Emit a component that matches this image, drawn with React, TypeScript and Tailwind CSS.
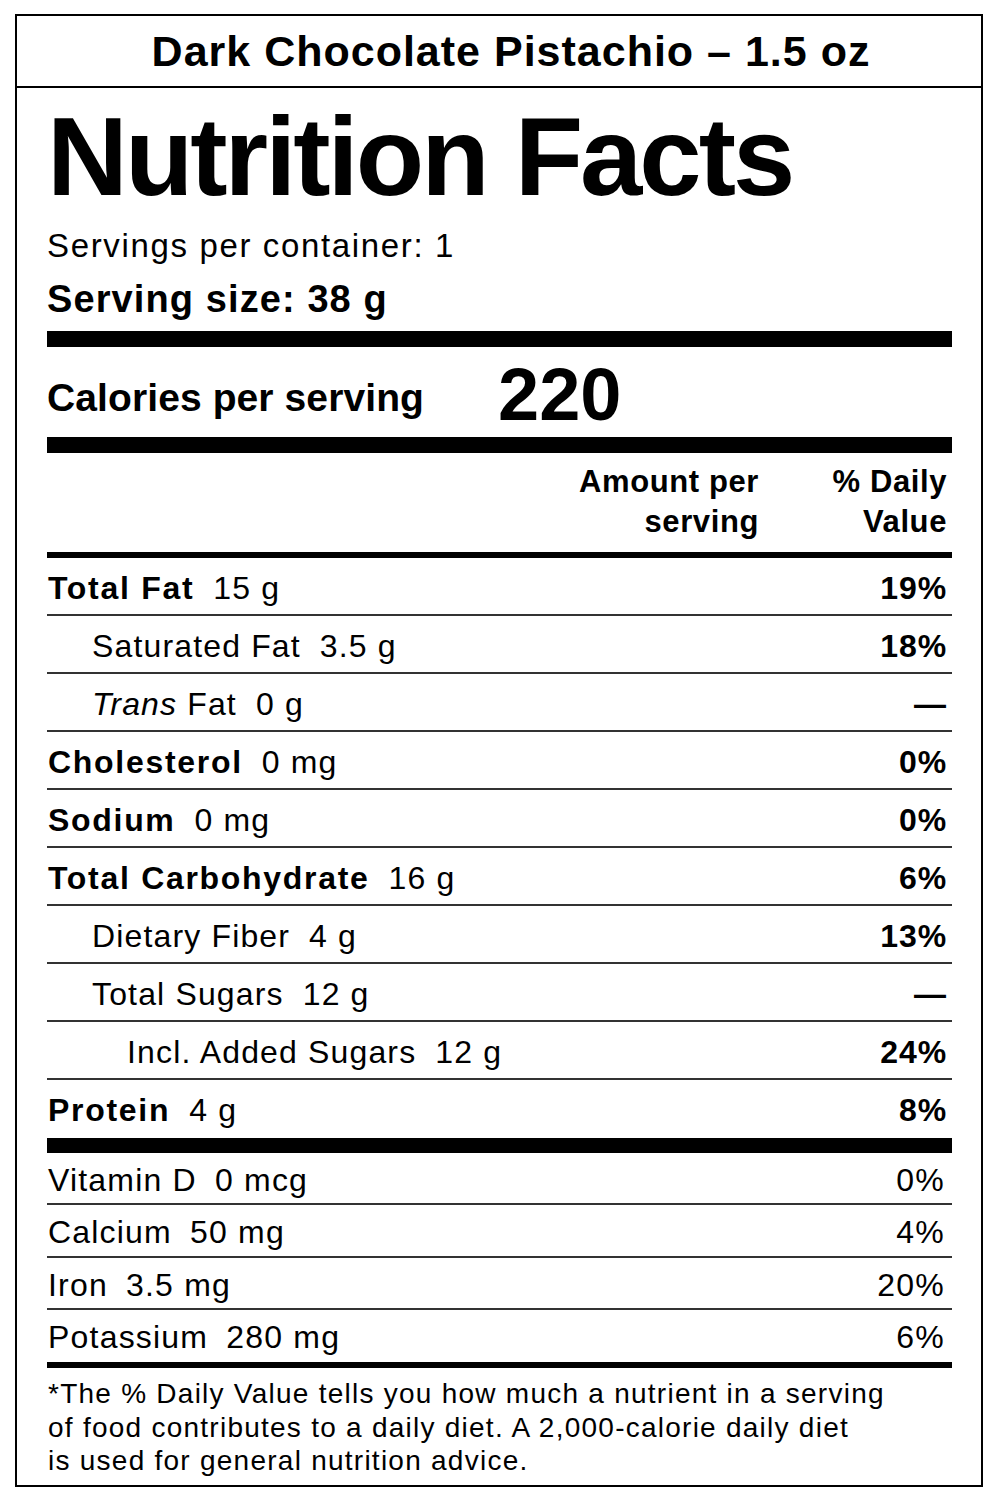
import React from "react";

type Row = {
  label: React.ReactNode;
  amount: string;
  dv: string;
  bold?: boolean;
  indent?: 0 | 1 | 2;
  last?: boolean;
};

const rows: Row[] = [
  { label: "Total Fat", amount: "15 g", dv: "19%", bold: true },
  { label: "Saturated Fat", amount: "3.5 g", dv: "18%", indent: 1 },
  {
    label: (
      <>
        <span className="italic">Trans</span> Fat
      </>
    ),
    amount: "0 g",
    dv: "—",
    indent: 1,
  },
  { label: "Cholesterol", amount: "0 mg", dv: "0%", bold: true },
  { label: "Sodium", amount: "0 mg", dv: "0%", bold: true },
  { label: "Total Carbohydrate", amount: "16 g", dv: "6%", bold: true },
  { label: "Dietary Fiber", amount: "4 g", dv: "13%", indent: 1 },
  { label: "Total Sugars", amount: "12 g", dv: "—", indent: 1 },
  { label: "Incl. Added Sugars", amount: "12 g", dv: "24%", indent: 2 },
  { label: "Protein", amount: "4 g", dv: "8%", bold: true, last: true },
];

const vitamins = [
  { label: "Vitamin D", amount: "0 mcg", dv: "0%" },
  { label: "Calcium", amount: "50 mg", dv: "4%" },
  { label: "Iron", amount: "3.5 mg", dv: "20%" },
  { label: "Potassium", amount: "280 mg", dv: "6%", last: true },
];

function NutrientRow({ r }: { r: Row }) {
  const indentCls = r.indent === 2 ? "pl-[80px]" : r.indent === 1 ? "pl-[45px]" : "pl-[1px]";
  return (
    <div
      className={`flex h-[58px] items-start justify-between pt-[15px] text-[32px] leading-[30px] tracking-[1.15px] ${
        r.last ? "" : "border-b-2 border-[#333]"
      }`}
    >
      <div className={`flex ${indentCls}`}>
        <span className={r.bold ? "font-bold tracking-[1.7px]" : ""}>{r.label}</span>
        <span className="pl-[19px]">{r.amount}</span>
      </div>
      <span className="pr-[5px] font-bold tracking-[0.9px]">{r.dv}</span>
    </div>
  );
}

export default function App() {
  return (
    <div className="min-h-[1500px] bg-white pt-[14px] font-['Liberation_Sans',Arial,sans-serif] text-black">
      <div className="ml-[15px] w-[968px] border-2 border-black">
        {/* Product header */}
        <div className="h-[72px] border-b-2 border-black pl-[24px] pt-[14px] text-center text-[43px] font-bold leading-[42px] tracking-[1px]">
          Dark Chocolate Pistachio – 1.5 oz
        </div>

        <div className="pl-[30px] pr-[29px] pb-[7px]">
          <div className="mt-[13px] text-[112px] font-bold leading-[112px] tracking-[-3px]">
            Nutrition Facts
          </div>
          <div className="mt-[14.5px] text-[33px] leading-[36px] tracking-[1.65px]">
            Servings per container: 1
          </div>
          <div className="mt-[15px] text-[38px] font-bold leading-[40px] tracking-[1.1px]">
            Serving size: 38 g
          </div>

          <div className="mt-[12.5px] h-[16px] bg-black" />

          <div className="flex h-[90px] items-start">
            <span className="mt-[31.5px] w-[451px] text-[39px] font-bold leading-[38px] tracking-[0.1px]">
              Calories per serving
            </span>
            <span className="mt-[10.5px] text-[74px] font-bold leading-[74px]">220</span>
          </div>

          <div className="h-[16px] bg-black" />

          <div className="flex h-[99px] items-start justify-end pt-[9px] text-[31px] font-bold leading-[40px] tracking-[0.6px]">
            <div className="text-right">
              Amount per
              <br />
              serving
            </div>
            <div className="w-[193px] pr-[5px] text-right">
              % Daily
              <br />
              Value
            </div>
          </div>

          <div className="h-[6px] bg-black" />

          {rows.map((r, i) => (
            <NutrientRow key={i} r={r} />
          ))}

          <div className="h-[15px] bg-black" />

          {vitamins.map((v, i) => (
            <div
              key={i}
              className={`flex h-[52.25px] items-start justify-between pt-[12px] text-[32px] leading-[30px] tracking-[1.2px] ${
                v.last ? "" : "border-b-2 border-[#333]"
              }`}
            >
              <div className="flex pl-[1px]">
                <span>{v.label}</span>
                <span className="pl-[18px]">{v.amount}</span>
              </div>
              <span className="pr-[7px]">{v.dv}</span>
            </div>
          ))}

          <div className="h-[6px] bg-black" />

          <div className="pl-[1px] pt-[9px] text-[28px] leading-[33.5px] tracking-[1.25px]">
            *The % Daily Value tells you how much a nutrient in a serving
            <br />
            of food contributes to a daily diet. A 2,000-calorie daily diet
            <br />
            is used for general nutrition advice.
          </div>
        </div>
      </div>
    </div>
  );
}
